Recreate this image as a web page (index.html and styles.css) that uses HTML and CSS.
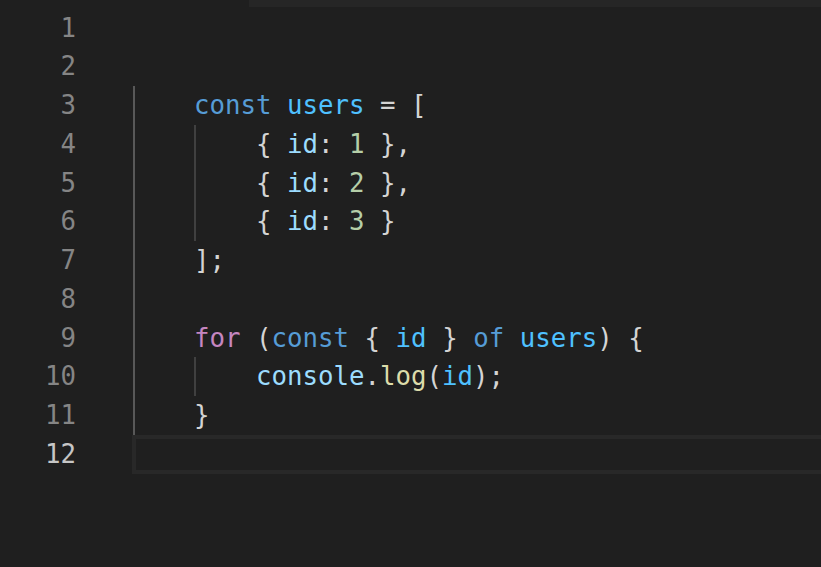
FILE: index.html
```html
<!DOCTYPE html>
<html>
<head>
<meta charset="utf-8">
<link rel="stylesheet" href="styles.css">
</head>
<body>
<div class="editor">
  <div class="top-shadow"></div>
  <div class="row"><span class="ln">1</span><span class="code"></span></div>
  <div class="row"><span class="ln">2</span><span class="code"></span></div>
  <div class="row"><span class="ln">3</span><span class="code"><span class="ind g1"></span><span class="kw">const</span> <span class="cv">users</span> <span class="p">=</span> <span class="p">[</span></span></div>
  <div class="row"><span class="ln">4</span><span class="code"><span class="ind g1"></span><span class="ind g2"></span><span class="p">{</span> <span class="pr">id</span><span class="p">:</span> <span class="num">1</span> <span class="p">},</span></span></div>
  <div class="row"><span class="ln">5</span><span class="code"><span class="ind g1"></span><span class="ind g2"></span><span class="p">{</span> <span class="pr">id</span><span class="p">:</span> <span class="num">2</span> <span class="p">},</span></span></div>
  <div class="row"><span class="ln">6</span><span class="code"><span class="ind g1"></span><span class="ind g2"></span><span class="p">{</span> <span class="pr">id</span><span class="p">:</span> <span class="num">3</span> <span class="p">}</span></span></div>
  <div class="row"><span class="ln">7</span><span class="code"><span class="ind g1"></span><span class="p">];</span></span></div>
  <div class="row"><span class="ln">8</span><span class="code"><span class="ind g1"></span></span></div>
  <div class="row"><span class="ln">9</span><span class="code"><span class="ind g1"></span><span class="ctl">for</span> <span class="p">(</span><span class="kw">const</span> <span class="p">{</span> <span class="cv">id</span> <span class="p">}</span> <span class="kw">of</span> <span class="cv">users</span><span class="p">)</span> <span class="p">{</span></span></div>
  <div class="row"><span class="ln">10</span><span class="code"><span class="ind g1"></span><span class="ind g2"></span><span class="pr">console</span><span class="p">.</span><span class="fn">log</span><span class="p">(</span><span class="cv">id</span><span class="p">);</span></span></div>
  <div class="row"><span class="ln">11</span><span class="code"><span class="ind g1"></span><span class="p">}</span></span></div>
  <div class="row"><span class="ln active">12</span><span class="code current"></span></div>
</div>
</body>
</html>
```

FILE: styles.css
```css
html, body {
  margin: 0;
  padding: 0;
  background: #1f1f1f;
  overflow: hidden;
}

.editor {
  position: relative;
  width: 821px;
  height: 567px;
  padding-top: 8.5px;
  box-sizing: border-box;
  font-family: "DejaVu Sans Mono", "Liberation Mono", monospace;
  font-size: 25.75px;
  color: #cccccc;
}

.top-shadow {
  position: absolute;
  left: 249px;
  right: 0;
  top: 0;
  height: 7px;
  background: #262626;
}

.row {
  display: flex;
  height: 38.75px;
  line-height: 38.75px;
  white-space: pre;
}

.ln {
  width: 76px;
  flex: none;
  text-align: right;
  color: #858585;
}

.ln.active {
  color: #c6c6c6;
}

.code {
  margin-left: 56px;
  flex: 1;
  display: block;
  height: 38.75px;
  white-space: pre;
}

.code.current {
  box-shadow: inset 4px 0 0 #282828, inset 0 4px 0 #282828, inset 0 -4px 0 #282828;
}

.ind {
  display: inline-block;
  width: 62px;
  height: 38.75px;
  vertical-align: top;
}

.g1 {
  background: linear-gradient(to right, transparent 1px, #585858 1px, #585858 3px, transparent 3px);
}

.g2 {
  background: linear-gradient(to right, #404040 2px, transparent 2px);
}

.kw { color: #569cd6; }
.ctl { color: #c586c0; }
.cv { color: #4fc1ff; }
.pr { color: #9cdcfe; }
.num { color: #b5cea8; }
.fn { color: #dcdcaa; }
.p { color: #d4d4d4; }
```
